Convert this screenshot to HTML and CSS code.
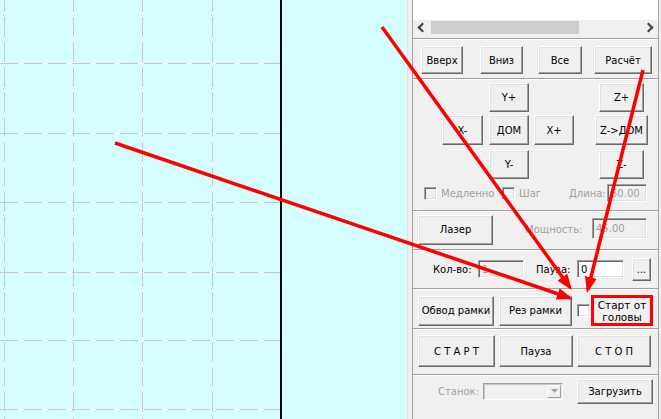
FILE: index.html
```html
<!DOCTYPE html>
<html lang="ru">
<head>
  <meta charset="UTF-8" />
  <meta name="viewport" content="width=device-width, initial-scale=1.0" />
  <title>Лазерный станок</title>
  <link rel="stylesheet" href="styles.css">
</head>
<body>
  <div class="screen">
    <div class="canvas">
      <svg class="grid" width="407" height="419" viewBox="0 0 407 419">
        <g class="grid-base">
          <line x1="4.5" y1="0" x2="4.5" y2="419"/>
          <line x1="73.5" y1="0" x2="73.5" y2="419"/>
          <line x1="142.5" y1="0" x2="142.5" y2="419"/>
          <line x1="212.5" y1="0" x2="212.5" y2="419"/>
          <line x1="0" y1="63.5" x2="280" y2="63.5"/>
          <line x1="0" y1="133.5" x2="280" y2="133.5"/>
          <line x1="0" y1="202.5" x2="280" y2="202.5"/>
          <line x1="0" y1="272.5" x2="280" y2="272.5"/>
          <line x1="0" y1="340.5" x2="280" y2="340.5"/>
          <line x1="0" y1="409.5" x2="280" y2="409.5"/>
        </g>
        <g class="grid-v">
          <line x1="4.5" y1="0" x2="4.5" y2="419"/>
          <line x1="73.5" y1="0" x2="73.5" y2="419"/>
          <line x1="142.5" y1="0" x2="142.5" y2="419"/>
          <line x1="212.5" y1="0" x2="212.5" y2="419"/>
        </g>
        <g class="grid-h">
          <line x1="0" y1="63.5" x2="280" y2="63.5"/>
          <line x1="0" y1="133.5" x2="280" y2="133.5"/>
          <line x1="0" y1="202.5" x2="280" y2="202.5"/>
          <line x1="0" y1="272.5" x2="280" y2="272.5"/>
          <line x1="0" y1="340.5" x2="280" y2="340.5"/>
          <line x1="0" y1="409.5" x2="280" y2="409.5"/>
        </g>
        <rect x="280" y="0" width="2" height="419" fill="#000"/>
      </svg>
    </div>

    <div class="panel">
      <div class="frame">
        <div class="listbox">
          <div class="list-area"></div>
          <div class="hscroll">
            <span class="sb-btn"><span class="chev left"></span></span>
            <span class="sb-thumb"></span>
            <span class="sb-fill"></span>
            <span class="sb-btn"><span class="chev right"></span></span>
          </div>
        </div>

        <div class="group g-nav">
          <button class="btn b-up">Вверх</button>
          <button class="btn b-down">Вниз</button>
          <button class="btn b-all">Все</button>
          <button class="btn b-calc">Расчёт</button>
        </div>

        <div class="group g-jog">
          <div class="jog">
            <button class="btn j-yp">Y+</button>
            <button class="btn j-zp">Z+</button>
            <button class="btn j-xm">X-</button>
            <button class="btn j-home">ДОМ</button>
            <button class="btn j-xp">X+</button>
            <button class="btn j-zhome">Z-&gt;ДОМ</button>
            <button class="btn j-ym">Y-</button>
            <button class="btn j-zm">Z-</button>
          </div>
          <div class="opts">
            <label class="check c-slow"><span class="box off"></span><span class="dis">Медленно</span></label>
            <label class="check c-step"><span class="box off"></span><span class="dis">Шаг</span></label>
            <span class="dis len-label">Длина:</span>
            <span class="field off f-len">50.00</span>
          </div>
        </div>

        <div class="group g-laser">
          <button class="btn b-laser">Лазер</button>
          <span class="dis pow-label">Мощность:</span>
          <span class="field off f-pow">45.00</span>
        </div>

        <div class="group g-count">
          <span class="cnt-label">Кол-во:</span>
          <span class="field off f-cnt">1</span>
          <span class="pause-label">Пауза:</span>
          <span class="field f-pause">0</span>
          <button class="btn b-more">...</button>
        </div>

        <div class="group g-frame">
          <button class="btn b-outline">Обвод рамки</button>
          <button class="btn b-cut">Рез рамки</button>
          <span class="box c-head"></span>
          <span class="head-label">Старт от<br>головы</span>
        </div>

        <div class="group g-run">
          <button class="btn b-run">С Т А Р Т</button>
          <button class="btn b-pause">Пауза</button>
          <button class="btn b-stop">С Т О П</button>
        </div>

        <div class="group g-machine">
          <span class="dis mach-label">Станок:</span>
          <span class="combo">
            <span class="combo-btn">
              <svg width="7" height="4" viewBox="0 0 7 4"><path d="M0 0 H7 L3.5 4 Z"/></svg>
            </span>
          </span>
          <button class="btn b-load">Загрузить</button>
        </div>
      </div>
    </div>

    <svg class="arrows" width="661" height="419" viewBox="0 0 661 419">
      <defs>
        <marker id="head" markerUnits="userSpaceOnUse" markerWidth="16" markerHeight="12" refX="13" refY="6" orient="auto">
          <path d="M0 0 L16 6 L0 12 Z" fill="#ff0000"/>
        </marker>
      </defs>
      <line x1="115" y1="143" x2="570" y2="298" marker-end="url(#head)"/>
      <line x1="382" y1="27" x2="570" y2="287.6" marker-end="url(#head)"/>
      <line x1="643" y1="70" x2="587.7" y2="290" marker-end="url(#head)"/>
    </svg>
  </div>
</body>
</html>
```

FILE: styles.css
```css
body {
  margin: 0;
  font-family: "DejaVu Sans", sans-serif;
  font-size: 10px;
  color: #000;
}
.screen {
  position: relative;
  display: flex;
  width: 661px;
  height: 419px;
  overflow: hidden;
  background: #f0f0f0;
}
.canvas {
  flex: none;
  width: 407px;
  height: 419px;
  background: #d5ffff;
}
.grid {
  display: block;
}
.grid-base line {
  stroke: #ffffff;
  stroke-width: 1;
}
.grid-v line {
  stroke: #c8c8c8;
  stroke-width: 1;
  stroke-dasharray: 20 5;
  stroke-dashoffset: 8;
}
.grid-h line {
  stroke: #c8c8c8;
  stroke-width: 1;
  stroke-dasharray: 18 6;
}

/* правая панель */
.panel {
  flex: none;
  width: 254px;
  height: 419px;
  box-sizing: border-box;
  border-left: 1px solid #e3e3e3;
  padding-left: 4px;
}
.frame {
  width: 247px;
  height: 419px;
  box-sizing: border-box;
  border-left: 1px solid #a0a0a0;
  border-right: 1px solid #a0a0a0;
}
.listbox {
  height: 38px;
}
.list-area {
  height: 20px;
  background: #fff;
}
.hscroll {
  display: flex;
  align-items: center;
  height: 15px;
  background: #f0f0f0;
}
.sb-btn {
  display: flex;
  flex: none;
  align-items: center;
  justify-content: center;
  width: 16px;
  height: 15px;
}
.chev {
  display: block;
  width: 5px;
  height: 5px;
  border-left: 2px solid #404040;
  border-bottom: 2px solid #404040;
}
.chev.left {
  margin-left: 3px;
  transform: rotate(45deg);
}
.chev.right {
  margin-right: 3px;
  transform: rotate(-135deg);
}
.sb-thumb {
  flex: none;
  width: 148px;
  height: 13px;
  margin-left: 2px;
  background: #cdcdcd;
}
.sb-fill {
  flex: 1;
}

.group {
  display: flex;
  align-items: flex-start;
  box-sizing: border-box;
  border-top: 1px solid #a0a0a0;
  box-shadow: inset 0 1px #fff;
}

.btn {
  box-sizing: border-box;
  margin: 0;
  padding: 0;
  background: #f0f0f0;
  border: 1px solid;
  border-color: #fff #696969 #696969 #fff;
  box-shadow: inset -1px -1px #a0a0a0, inset 1px 1px #e3e3e3;
  font-family: inherit;
  font-size: 10px;
  color: #000;
  white-space: nowrap;
}

.field {
  display: flex;
  align-items: center;
  box-sizing: border-box;
  padding-left: 3px;
  background: #fff;
  border: 1px solid;
  border-color: #a0a0a0 #fff #fff #a0a0a0;
  box-shadow: inset 1px 1px #696969, inset -1px -1px #e3e3e3;
}
.field.off {
  background: #f0f0f0;
  color: #a0a0a0;
}
.dis {
  color: #a0a0a0;
}

.box {
  display: inline-block;
  flex: none;
  width: 13px;
  height: 13px;
  box-sizing: border-box;
  background: #fff;
  border: 1px solid;
  border-color: #a0a0a0 #fff #fff #a0a0a0;
  box-shadow: inset 1px 1px #696969, inset -1px -1px #e3e3e3;
}
.box.off {
  background: #f0f0f0;
}

/* кнопки навигации */
.g-nav {
  height: 40px;
  padding: 7px 0 0 8px;
}
.g-nav .btn {
  height: 28px;
}
.b-up { width: 42px; }
.b-down { width: 43px; margin-left: 17px; }
.b-all { width: 44px; margin-left: 15px; }
.b-calc { width: 58px; margin-left: 12px; }

/* перемещение */
.g-jog {
  flex-direction: column;
  height: 132px;
  padding: 4px 0 0 0;
}
.jog {
  display: grid;
  grid-template-columns: 47px 45px 61px 53px;
  grid-template-rows: 29px 30px 29px;
  row-gap: 3px;
  margin-left: 29px;
}
.jog .btn {
  height: 100%;
}
.jog .btn:nth-child(n+7) {
  margin-top: 2px;
}
.j-yp { grid-column: 2; grid-row: 1; width: 40px; }
.j-zp { grid-column: 4; grid-row: 1; width: 45px; margin-left: 4px; }
.j-xm { grid-column: 1; grid-row: 2; width: 41px; }
.j-home { grid-column: 2; grid-row: 2; width: 40px; }
.j-xp { grid-column: 3; grid-row: 2; width: 40px; }
.j-zhome { grid-column: 4; grid-row: 2; width: 53px; }
.j-ym { grid-column: 2; grid-row: 3; width: 40px; }
.j-zm { grid-column: 4; grid-row: 3; width: 45px; margin-left: 4px; }

.opts {
  display: flex;
  align-items: center;
  height: 18px;
  margin: 7px 0 0 11px;
}
.check {
  display: flex;
  align-items: center;
  gap: 4px;
}
.c-slow { width: 78px; }
.c-step { width: 67px; }
.len-label { width: 38px; }
.f-len { width: 40px; height: 18px; }

/* лазер */
.g-laser {
  align-items: center;
  height: 39px;
  padding: 0 0 1px 5px;
}
.b-laser {
  width: 75px;
  height: 30px;
}
.pow-label {
  width: 67px;
  margin-left: 32px;
}
.f-pow {
  width: 55px;
  height: 21px;
  margin-top: -2px;
}

/* количество */
.g-count {
  align-items: center;
  height: 39px;
  padding: 0 0 0 20px;
}
.cnt-label { width: 45px; }
.f-cnt { width: 46px; height: 18px; }
.pause-label { width: 41px; margin-left: 12px; }
.f-pause { width: 47px; height: 18px; }
.b-more {
  width: 19px;
  height: 23px;
  margin-left: 8px;
}

/* рамка */
.g-frame {
  align-items: center;
  height: 40px;
  padding: 4px 0 0 5px;
}
.g-frame .btn {
  height: 30px;
}
.b-outline { width: 76px; }
.b-cut { width: 73px; margin-left: 5px; }
.c-head { margin-left: 5px; }
.head-label {
  display: flex;
  align-items: center;
  justify-content: center;
  box-sizing: border-box;
  width: 62px;
  height: 31px;
  margin: 0 0 0 1px;
  border: 3px solid #ff0000;
  text-align: center;
  font-size: 10.5px;
  line-height: 12px;
}

/* запуск */
.g-run {
  height: 46px;
  padding: 6px 0 0 5px;
  gap: 4px;
}
.g-run .btn {
  height: 32px;
}
.b-run { width: 77px; }
.b-pause { width: 74px; }
.b-stop { width: 74px; }

/* станок */
.g-machine {
  align-items: center;
  height: 45px;
  padding: 0 0 12px 25px;
}
.mach-label { width: 45px; }
.combo {
  display: flex;
  justify-content: flex-end;
  box-sizing: border-box;
  width: 80px;
  height: 17px;
  padding: 1px;
  background: #f0f0f0;
  border: 1px solid;
  border-color: #a0a0a0 #fff #fff #a0a0a0;
  box-shadow: inset 1px 1px #c8c8c8;
}
.combo-btn {
  display: flex;
  align-items: center;
  justify-content: center;
  width: 14px;
  box-sizing: border-box;
  border: 1px solid;
  border-color: #fff #a0a0a0 #a0a0a0 #fff;
}
.combo-btn path {
  fill: #a0a0a0;
}
.b-load {
  width: 76px;
  height: 25px;
  margin-left: 14px;
}

.arrows {
  position: absolute;
  top: 0;
  left: 0;
  pointer-events: none;
}
.arrows line {
  stroke: #ff0000;
  stroke-width: 3.5;
}
```
